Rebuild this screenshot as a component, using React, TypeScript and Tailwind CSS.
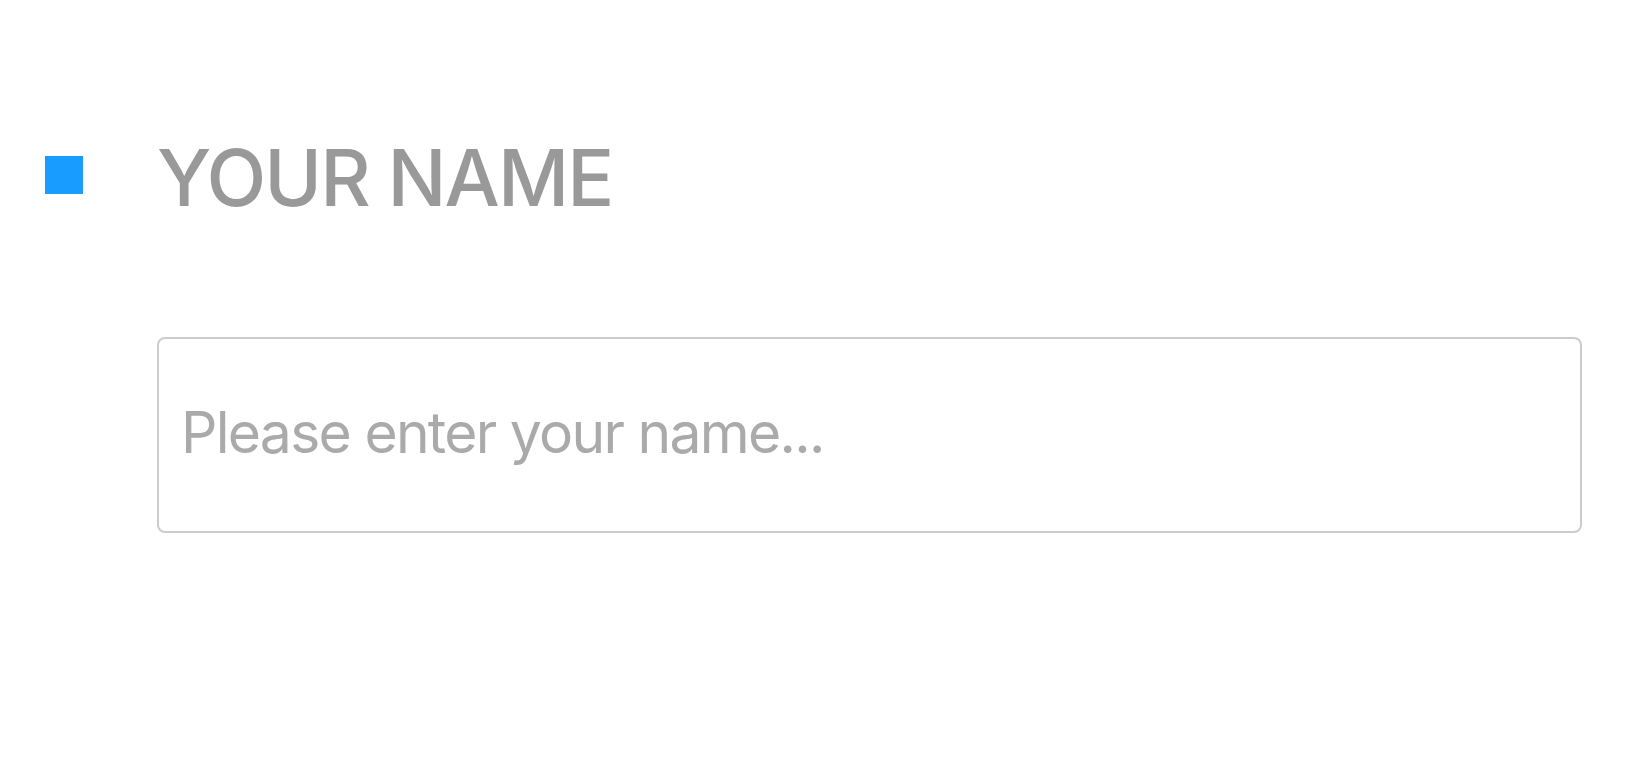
import React from "react";

export default function App() {
  return (
    <div className="min-h-screen w-full bg-white" style={{ fontFamily: "Inter, 'Noto Sans', sans-serif" }}>
      <div className="pl-[45px] pr-[64px] pt-[139px]">
        <div className="flex items-center">
          <div className="w-[38px] h-[38px] bg-[#199cff] shrink-0 mb-[6px]" />
          <h1 className="ml-[74px] text-[78px] leading-none font-medium text-[#999999] tracking-[-0.025em]">YOUR NAME</h1>
        </div>
        <div className="ml-[112px] mt-[120px]">
          <input
            type="text"
            placeholder="Please enter your name..."
            className="w-full h-[196px] border-2 border-[#cccccc] rounded-[8px] pl-[22px] pr-[26px] pb-[6px] text-[57px] tracking-[-0.03em] text-[#999] placeholder:text-[#aaaaaa] outline-none"
          />
        </div>
      </div>
    </div>
  );
}
